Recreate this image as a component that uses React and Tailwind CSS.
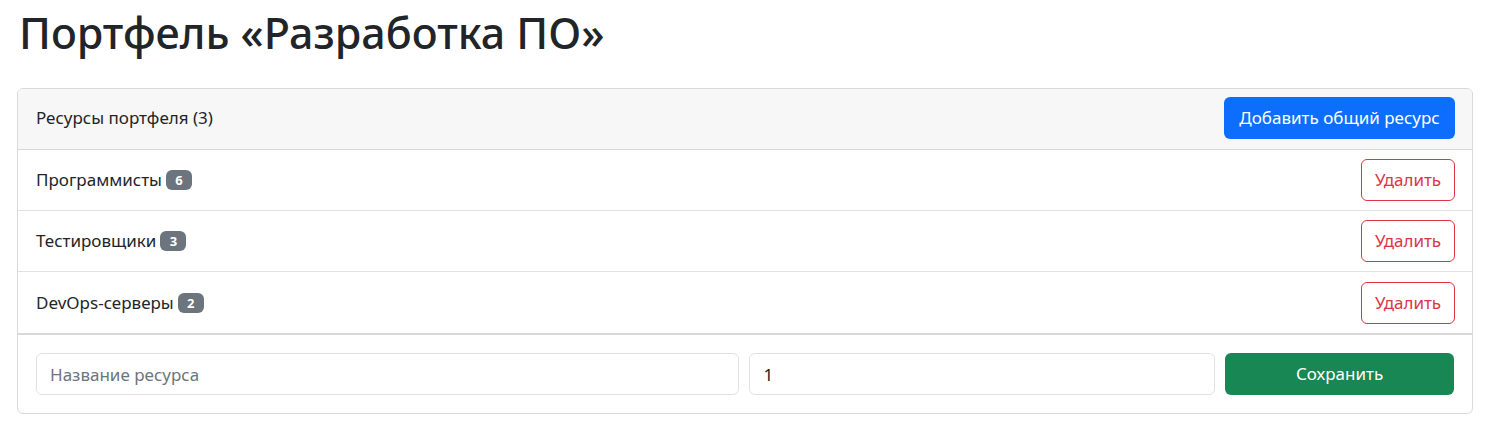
export default function App() {
  const rows = [
    { name: "Программисты", count: 6 },
    { name: "Тестировщики", count: 3 },
    { name: "DevOps-серверы", count: 2 },
  ];
  return (
    <div className="px-[17px] pt-[9px] pb-[21px] text-[#212529] bg-white" style={{ fontFamily: '"Noto Sans", "Open Sans", sans-serif' }}>
      <h1 className="text-[43px] font-medium leading-[48px] mb-[31px] pl-[2px]">Портфель «Разработка ПО»</h1>
      <div className="border border-[#d9d9d9] rounded-[6px] overflow-hidden">
        <div className="flex items-center justify-between bg-[#f7f7f7] border-b border-[#d9d9d9] pl-[18px] pr-[17px] pt-[8px] pb-[10px]">
          <span className="text-[17px] leading-[24px]">Ресурсы портфеля (3)</span>
          <button className="h-[42px] w-[231px] rounded-[6px] bg-[#0d6efd] text-white text-[17px] leading-[24px]">Добавить общий ресурс</button>
        </div>
        {rows.map((r, i) => (
          <div key={r.name} className={"flex items-center justify-between pl-[18px] pr-[17px] " + (i < rows.length - 1 ? "py-[9px] border-b border-[#e1e1e1]" : "pt-[10px] pb-[9px] border-b-2 border-[#d9d9d9]")}>
            <div className="flex items-center gap-[4px]">
              <span className="text-[17px] leading-[24px]">{r.name}</span>
              <span className="inline-flex items-center justify-center h-[20px] w-[26px] rounded-[6px] bg-[#6c757d] text-white text-[13px] font-bold leading-none">{r.count}</span>
            </div>
            <button className="h-[42px] w-[94px] rounded-[6px] border border-[#dc3545] text-[#dc3545] text-[17px] leading-[24px] bg-white">Удалить</button>
          </div>
        ))}
        <div className="grid grid-cols-[704fr_466fr_229fr] gap-[10px] pl-[18px] pr-[18px] pt-[18px] pb-[18px]">
          <input className="h-[42px] rounded-[6px] border border-[#dee2e6] px-[13px] text-[17px] placeholder:text-[#6c757d] outline-none" placeholder="Название ресурса" />
          <input className="h-[42px] rounded-[6px] border border-[#dee2e6] px-[13px] text-[17px] outline-none" defaultValue="1" />
          <button className="h-[42px] rounded-[6px] bg-[#198754] text-white text-[17px] leading-[24px]">Сохранить</button>
        </div>
      </div>
    </div>
  );
}
